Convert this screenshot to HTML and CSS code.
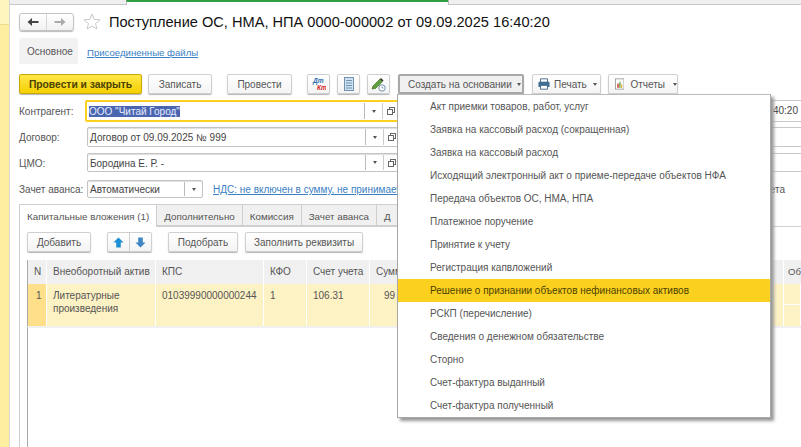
FILE: index.html
```html
<!DOCTYPE html>
<html>
    <head>
        <meta charset="UTF-8">
        <title>Поступление ОС, НМА, НПА</title>
        <link rel="stylesheet" href="styles.css">
    </head>
    <body>
        <div class="side"><div class="side-top"></div></div>
        <div class="main">
            <div class="topbar"><div class="topbar-gray"></div><div class="topbar-open"></div><div class="topbar-rest"></div></div>

            <div class="form">
                <div class="title-row">
                    <div class="nav">
                        <span class="nav-btn">
                            <svg width="12" height="10" viewBox="0 0 12 10"><path d="M0.5 5 L5 1 V4 H11.5 V6 H5 V9 Z" fill="#444"/></svg>
                        </span>
                        <span class="nav-btn">
                            <svg width="12" height="10" viewBox="0 0 12 10"><path d="M11.5 5 L7 1 V4 H0.5 V6 H7 V9 Z" fill="#aaa"/></svg>
                        </span>
                    </div>
                    <svg class="star" width="18" height="17" viewBox="0 0 18 17"><path d="M9 1 L11.2 6.4 L17 6.8 L12.5 10.5 L14 16 L9 13 L4 16 L5.5 10.5 L1 6.8 L6.8 6.4 Z" fill="#fff" stroke="#c9c9c9"/></svg>
                    <h1>Поступление ОС, НМА, НПА 0000-000002 от 09.09.2025 16:40:20</h1>
                </div>

                <div class="sections">
                    <span class="section-on">Основное</span>
                    <a class="link link-files">Присоединенные файлы</a>
                </div>

                <div class="toolbar">
                    <button class="btn btn-main">Провести и закрыть</button>
                    <button class="btn btn-save">Записать</button>
                    <button class="btn btn-post">Провести</button>
                    <button class="btn btn-icon">
                        <svg width="14" height="14" viewBox="0 0 14 14">
                            <text x="1" y="6" class="dt">Дт</text>
                            <text x="5" y="13" class="kt">Кт</text>
                        </svg>
                    </button>
                    <button class="btn btn-icon btn-list">
                        <svg width="10" height="14" viewBox="0 0 10 14"><rect x="0.5" y="0.5" width="9" height="13" fill="#cfe0ee" stroke="#6f93b0"/><path d="M2 3.5 H8 M2 6 H8 M2 8.5 H8 M2 11 H8" stroke="#6f93b0"/></svg>
                    </button>
                    <button class="btn btn-icon btn-pen">
                        <svg width="15" height="15" viewBox="0 0 15 15"><path d="M1 12 L2 9 L9 2 L11.5 4.5 L4.5 11.5 Z" fill="#5f9e3a" stroke="#3d6e22" stroke-width="0.7"/><path d="M9 2 L10 1 L12.5 3.5 L11.5 4.5 Z" fill="#333"/><circle cx="11" cy="11" r="3.2" fill="#fff" stroke="#6f8ea8"/><path d="M11 9.5 V11 H12.5" stroke="#6f8ea8" fill="none" stroke-width="0.8"/></svg>
                    </button>
                    <button class="btn btn-create">Создать на основании<i class="caret"></i></button>
                    <button class="btn btn-print">
                        <svg width="12" height="12" viewBox="0 0 14 13"><rect x="3" y="0.5" width="8" height="4" fill="#fff" stroke="#3f5f7d"/><rect x="0.5" y="4" width="13" height="6" rx="1" fill="#3f6f96"/><rect x="3" y="8" width="8" height="4.5" fill="#fff" stroke="#3f5f7d"/></svg>
                        Печать<i class="caret"></i>
                    </button>
                    <button class="btn btn-report">
                        <svg width="10" height="12" viewBox="0 0 11 13"><rect x="0.5" y="0.5" width="10" height="12" fill="#fff" stroke="#999"/><rect x="2.5" y="6" width="2" height="5" fill="#d9534f"/><rect x="5" y="4" width="1.5" height="7" fill="#5b9e3c"/><rect x="7" y="7" width="1.5" height="4" fill="#e0b030"/></svg>
                        Отчеты<i class="caret"></i>
                    </button>
                </div>

                <div class="row row-first">
                    <label>Контрагент:</label>
                    <div class="field field-focus"><span><mark>ООО "Читай Город"</mark></span><i class="drop"><i class="caret"></i></i><i class="open"><svg width="8" height="8" viewBox="0 0 8 8"><rect x="2.5" y="0.5" width="5" height="5" fill="#fff" stroke="#666"/><rect x="0.5" y="2.5" width="5" height="5" fill="#fff" stroke="#666"/></svg></i></div>
                    <div class="field-right">09.09.2025 16:40:20</div>
                </div>
                <div class="row row-second">
                    <label>Договор:</label>
                    <div class="field"><span>Договор от 09.09.2025 № 999</span><i class="drop"><i class="caret"></i></i><i class="open"><svg width="8" height="8" viewBox="0 0 8 8"><rect x="2.5" y="0.5" width="5" height="5" fill="#fff" stroke="#666"/><rect x="0.5" y="2.5" width="5" height="5" fill="#fff" stroke="#666"/></svg></i></div>
                    <div class="field-right"></div>
                </div>
                <div class="row row-third">
                    <label>ЦМО:</label>
                    <div class="field"><span>Бородина Е. Р. -</span><i class="drop"><i class="caret"></i></i><i class="open"><svg width="8" height="8" viewBox="0 0 8 8"><rect x="2.5" y="0.5" width="5" height="5" fill="#fff" stroke="#666"/><rect x="0.5" y="2.5" width="5" height="5" fill="#fff" stroke="#666"/></svg></i></div>
                    <div class="field-right"></div>
                </div>
                <div class="row row-fourth">
                    <label>Зачет аванса:</label>
                    <div class="field field-short"><span>Автоматически</span><i class="drop"><i class="caret"></i></i></div>
                    <a class="link link-vat">НДС: не включен в сумму, не принимается к вычету</a>
                    <span class="tail">счета</span>
                </div>

                <div class="tabs">
                    <span class="tab tab-on">Капитальные вложения (1)</span>
                    <span class="tab">Дополнительно</span>
                    <span class="tab">Комиссия</span>
                    <span class="tab">Зачет аванса</span>
                    <span class="tab">Д</span>
                </div>

                <div class="panel">
                    <div class="panel-bar">
                        <button class="btn btn-add">Добавить</button>
                        <div class="arrows">
                            <span><svg width="11" height="11" viewBox="0 0 12 12"><path d="M6 0.5 L11.5 6 H8.5 V11.5 H3.5 V6 H0.5 Z" fill="#1f8fd6"/></svg></span>
                            <span><svg width="11" height="11" viewBox="0 0 12 12"><path d="M6 11.5 L11.5 6 H8.5 V0.5 H3.5 V6 H0.5 Z" fill="#3f86c4"/></svg></span>
                        </div>
                        <button class="btn btn-pick">Подобрать</button>
                        <button class="btn btn-fill">Заполнить реквизиты</button>
                    </div>

                    <div class="grid">
                        <div class="head">N</div>
                        <div class="head">Внеоборотный актив</div>
                        <div class="head">КПС</div>
                        <div class="head">КФО</div>
                        <div class="head">Счет учета</div>
                        <div class="head">Сумма</div>
                        <div class="head head-last">Об</div>

                        <div class="cell cell-n">1</div>
                        <div class="cell">Литературные произведения</div>
                        <div class="cell">01039990000000244</div>
                        <div class="cell">1</div>
                        <div class="cell">106.31</div>
                        <div class="cell cell-sum">99</div>
                        <div class="cell cell-split"></div>
                    </div>
                    <div class="grid-end"></div>
                </div>
            </div>
        </div>

        <ul class="menu">
            <li>Акт приемки товаров, работ, услуг</li>
            <li>Заявка на кассовый расход (сокращенная)</li>
            <li>Заявка на кассовый расход</li>
            <li>Исходящий электронный акт о приеме-передаче объектов НФА</li>
            <li>Передача объектов ОС, НМА, НПА</li>
            <li>Платежное поручение</li>
            <li>Принятие к учету</li>
            <li>Регистрация капвложений</li>
            <li class="menu-on">Решение о признании объектов нефинансовых активов</li>
            <li>РСКП (перечисление)</li>
            <li>Сведения о денежном обязательстве</li>
            <li>Сторно</li>
            <li>Счет-фактура выданный</li>
            <li>Счет-фактура полученный</li>
        </ul>
    </body>
</html>
```

FILE: styles.css
```css
html, body {
    height: 447px;
    overflow: hidden;
}

body {
    display: flex;
    position: relative;
    width: 801px;
    margin: 0;
    font-family: "Liberation Sans", sans-serif;
    font-size: 10px;
    color: #555;
    background-color: white;
}

.side {
    flex: none;
    width: 9px;
    border-right: 1px solid #d8d8d8;
    background-color: #fdeea0;
}

.side-top {
    height: 24px;
    border-bottom: 1px solid #ecdd95;
    background-color: #fdf3bd;
}

.main {
    flex: 1;
    min-width: 0;
    overflow: hidden;
}

.topbar {
    display: flex;
    height: 5px;
}

.topbar-gray {
    width: 116px;
    border-bottom: 1px solid #c8c8c8;
    background-color: #efefef;
}

.topbar-open {
    width: 321px;
    height: 3px;
    border-top: 2px solid #2f9e44;
    border-left: 1px solid #bbb;
}

.topbar-rest {
    flex: 1;
    border-bottom: 1px solid #c8c8c8;
    border-left: 1px solid #bbb;
    background-color: #efefef;
}

.form {
    padding: 7px 0 0 9px;
}

.title-row {
    display: flex;
    align-items: center;
    height: 19px;
}

.nav {
    display: flex;
    width: 55px;
    height: 18px;
    border: 1px solid #c4c4c4;
    border-radius: 3px;
    box-sizing: border-box;
    box-shadow: 0 1px 1px #bbb;
    background: linear-gradient(#fff, #f1f1f1);
}

.nav-btn {
    display: flex;
    flex: 1;
    align-items: center;
    justify-content: center;
}

.nav-btn + .nav-btn {
    border-left: 1px solid #d8d8d8;
}

.star {
    margin: 0 8px 0 9px;
}

h1 {
    margin: 0;
    font-size: 14.6px;
    font-weight: normal;
    color: #111;
    white-space: nowrap;
}

.sections {
    display: flex;
    align-items: center;
    gap: 9px;
    height: 26px;
    margin-top: 7px;
}

.section-on {
    width: 59px;
    box-sizing: border-box;
    padding: 1px 0 0 8px;
    line-height: 25px;
    border-radius: 2px;
    background-color: #f2f2f2;
}

.link {
    color: #3b7fc4;
    text-decoration: underline;
}

.link-files {
    padding-top: 2px;
    font-size: 9.6px;
}

.toolbar {
    display: flex;
    height: 20px;
    margin-top: 10px;
}

.btn {
    display: flex;
    align-items: center;
    justify-content: center;
    box-sizing: border-box;
    height: 20px;
    padding: 0;
    border: 1px solid #cfcfcf;
    border-radius: 2px;
    font: inherit;
    color: #555;
    white-space: nowrap;
    background: linear-gradient(#fff, #f4f4f4);
    box-shadow: 0 1px 1px #b5b5b5;
}

.btn-main {
    width: 123px;
    border-color: #c9a800;
    font-size: 10.3px;
    font-weight: bold;
    color: #4a4200;
    background: linear-gradient(#ffe84a, #f5cf00);
}

.btn-save { width: 64px; margin-left: 6px; }
.btn-post { width: 65px; margin-left: 15px; }
.btn-icon { width: 23px; margin-left: 15px; }
.btn-list { margin-left: 7px; }
.btn-pen { margin-left: 7px; }

.btn-create {
    justify-content: flex-start;
    width: 126px;
    margin-left: 8px;
    padding-left: 8px;
    border: 2px solid #a8a8a8;
    background: #f0f0f0;
}

.btn-print {
    justify-content: flex-start;
    width: 69px;
    margin-left: 8px;
    padding-left: 5px;
    gap: 4px;
}

.btn-report {
    justify-content: flex-start;
    width: 70px;
    margin-left: 7px;
    padding-left: 6px;
    gap: 6px;
}

.btn-print .caret, .btn-report .caret {
    margin-left: 2px;
}

.dt, .kt {
    font-size: 6.5px;
    font-weight: bold;
    font-style: italic;
}

.dt { fill: #2a6fb0; }
.kt { fill: #d02020; }

.caret {
    display: inline-block;
    width: 0;
    height: 0;
    margin-left: 5px;
    border-top: 3px solid #555;
    border-right: 2.5px solid transparent;
    border-left: 2.5px solid transparent;
}

.row {
    display: flex;
    align-items: center;
}

.row label {
    flex: none;
    width: 68px;
    padding-top: 1px;
}

.row-first { height: 22px; margin-top: 6px; }
.row-second { height: 20px; margin-top: 5px; }
.row-third { height: 19px; margin-top: 6px; }
.row-fourth { height: 18px; margin-top: 8px; }

.field {
    display: flex;
    flex: none;
    align-items: stretch;
    box-sizing: border-box;
    width: 540px;
    height: 100%;
    border: 1px solid #c4c4c4;
    border-radius: 2px;
    box-shadow: inset 0 1px 1px #ddd;
    background-color: white;
    color: #444;
}

.field span {
    flex: 1;
    padding: 1px 0 0 2px;
    align-self: center;
}

.field-focus {
    width: 542px;
    margin-left: -2px;
    border: 2px solid #fcd01e;
    box-shadow: none;
}

mark {
    background-color: #4a66b0;
    color: #e8ecff;
}

.drop {
    display: flex;
    flex: none;
    align-items: center;
    justify-content: center;
    width: 17px;
    margin: 1px 0;
    border-left: 1px solid #bbb;
}

.drop .caret {
    margin: 0;
}

.open {
    display: flex;
    flex: none;
    align-items: center;
    box-sizing: border-box;
    width: 243px;
    margin: 1px 0;
    padding-left: 4px;
    border-left: 1px solid #ccc;
}

.field-short {
    width: 116px;
}

.field-right {
    flex: none;
    box-sizing: border-box;
    width: 155px;
    height: 100%;
    margin-left: 19px;
    padding-right: 3px;
    border-top: 1px solid #c8c8c8;
    border-bottom: 1px solid #c8c8c8;
    text-align: right;
    line-height: 20px;
    color: #444;
}

.link-vat {
    margin-left: 10px;
    padding-top: 1px;
}

.tail {
    margin-left: auto;
    margin-right: 16px;
}

.tabs {
    display: flex;
    height: 22px;
    margin-top: 6px;
}

.tab {
    box-sizing: border-box;
    padding: 1px 7px 0;
    font-size: 9.8px;
    line-height: 21px;
    border: 1px solid #cfcfcf;
    border-left: 0;
    background-color: #f0f0f0;
}

.tab-on {
    position: relative;
    height: 23px;
    border-left: 1px solid #cfcfcf;
    border-bottom: 0;
    background-color: white;
}

.panel {
    height: 300px;
    padding: 5px 0 0 7px;
    border-top: 1px solid #cfcfcf;
    border-left: 1px solid #cfcfcf;
}

.panel-bar {
    display: flex;
    height: 20px;
}

.btn-add { width: 64px; }

.arrows {
    display: flex;
    box-sizing: border-box;
    width: 45px;
    height: 20px;
    margin-left: 16px;
    border: 1px solid #cfcfcf;
    border-radius: 2px;
    box-shadow: 0 1px 1px #b5b5b5;
    background: linear-gradient(#fff, #f4f4f4);
}

.arrows span {
    display: flex;
    flex: 1;
    align-items: center;
    justify-content: center;
}

.arrows span + span {
    border-left: 1px solid #cfcfcf;
}

.btn-pick { width: 70px; margin-left: 16px; }
.btn-fill { width: 118px; margin-left: 7px; }

.grid {
    display: grid;
    grid-template-columns: 19px 109px 108px 43px 63px 414px 17px;
    grid-template-rows: 24px 42px;
    margin-top: 8px;
    border-left: 1px solid #aaa;
}

.head {
    padding: 6px 0 0 6px;
    border-right: 1px solid #fff;
    background-color: #f0f0f0;
    white-space: nowrap;
    overflow: hidden;
}

.head-last {
    padding-left: 4px;
    border-right: 0;
    font-size: 9.5px;
}

.cell {
    padding: 5px 6px 0;
    border-right: 1px solid #fff;
    line-height: 13px;
    background-color: #fdf2c4;
}

.cell-n {
    padding-left: 8px;
    background-color: #fee08a;
}

.cell-sum {
    padding-left: 14px;
}

.cell-split {
    background: linear-gradient(#fdf2c4 20px, #fff 20px, #fff 21px, #fdf2c4 21px);
}

.grid-end {
    height: 200px;
    border-top: 2px solid #f0f0f0;
    border-left: 1px solid #aaa;
}

.menu {
    position: absolute;
    top: 94px;
    left: 397px;
    box-sizing: content-box;
    width: 372px;
    height: 322px;
    margin: 0;
    padding: 0;
    list-style: none;
    border: 1px solid #a8a8a8;
    border-top-color: #bbb;
    background-color: white;
    box-shadow: 3px 3px 3px #999;
}

.menu li {
    height: 23px;
    padding-left: 32px;
    line-height: 24px;
}

.menu .menu-on {
    background-color: #fcd01e;
    color: #4a4200;
}
```
